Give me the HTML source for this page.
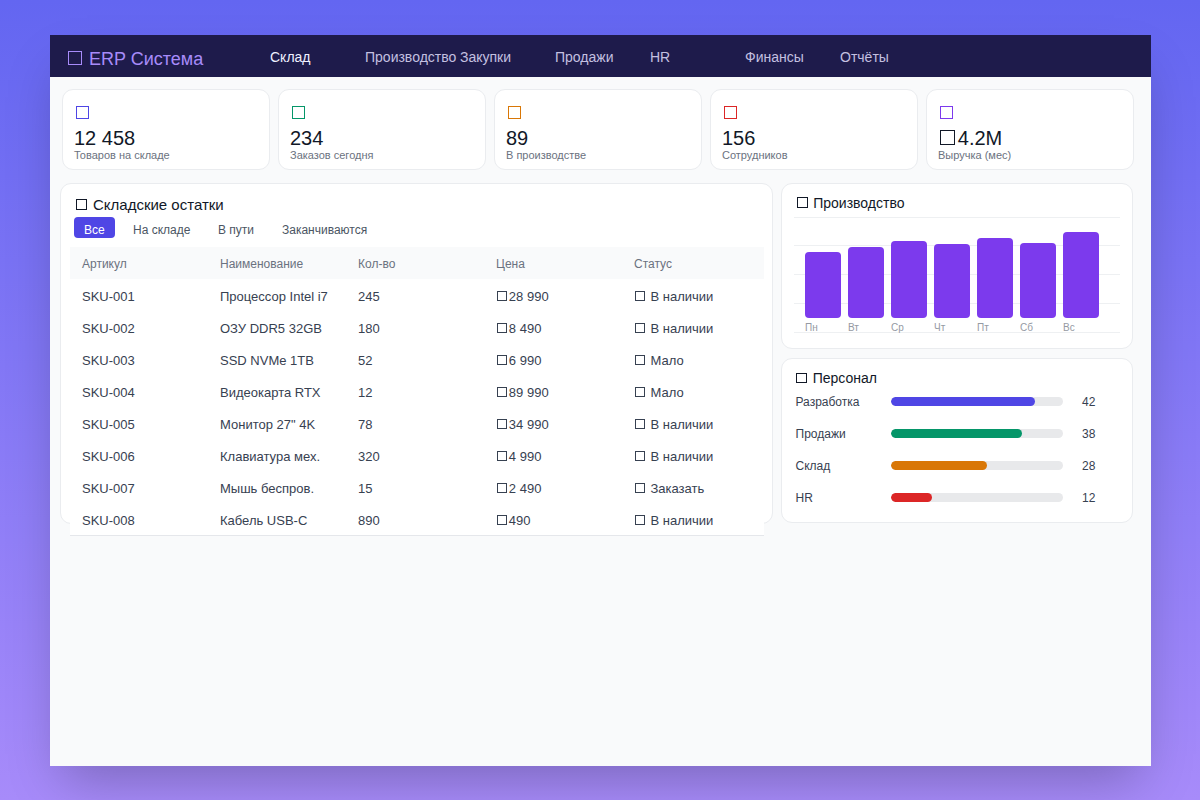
<!DOCTYPE html>
<html><head><meta charset="utf-8">
<style>
*{margin:0;padding:0;box-sizing:border-box}
html,body{width:1200px;height:800px;overflow:hidden}
body{font-family:"Liberation Sans",sans-serif;background:linear-gradient(180deg,#6366f1 0%,#a78bfa 100%);position:relative;color:#1f2937}
.app{position:absolute;left:50px;top:35px;width:1101px;height:731px;background:#f9fafb;box-shadow:0 25px 50px -12px rgba(0,0,0,.25);overflow:hidden}
.nav{position:absolute;left:0;top:0;width:1101px;height:42px;background:#1e1b4b}
.abs{position:absolute;white-space:nowrap}
.tf{display:inline-block;width:.76em;height:.75em;border:1px solid currentColor;margin:0 .13em 0 .1em;vertical-align:baseline}
.logo{left:16.2px;top:14.5px;font-size:18px;line-height:18px;color:#a78bfa}
.ni{top:14px;font-size:14px;line-height:16px;color:#c4c0e0}
.ni.act{color:#eef0ff}
.card{position:absolute;background:#fff;border:1px solid #eaecef;border-radius:11px}
.stat .ic{position:absolute;left:11px;top:14px;font-size:18px;line-height:18px}
.stat .num{position:absolute;left:11px;top:37px;font-size:20px;line-height:22px;color:#111827}
.stat .lbl{position:absolute;left:11px;top:59px;font-size:11px;line-height:13px;color:#6b7280}
.ttl{position:absolute;font-size:15px;line-height:17px;color:#111827}
.tabs{position:absolute;left:13px;top:33px;height:21px}
.tab{position:absolute;top:0;height:21px;font-size:12px;line-height:21px;padding-top:3px;color:#4b5563;white-space:nowrap}
.tab.act{background:#4f46e5;color:#fff;border-radius:4px;padding:3px 10px 0}
table{position:absolute;left:9px;top:63px;width:694px;border-collapse:collapse;table-layout:fixed;background:#fff}
th{background:#f9fafb;height:32px;font-size:12px;font-weight:normal;color:#6b7280;text-align:left;padding:2px 12px 0}
td{height:32px;font-size:13px;color:#374151;padding:2px 12px 0;white-space:nowrap}
tbody tr:last-child td{border-bottom:1px solid #e5e7eb;padding-top:3px}
.ttl2{position:absolute;font-size:14px;line-height:16px;color:#111827;white-space:nowrap}
.grid{position:absolute;left:744px;width:326px;height:1px;background:#eef0f2}
.bar{position:absolute;width:35.8px;background:#7c3aed;border-radius:4px}
.day{position:absolute;top:286.5px;font-size:10px;line-height:11px;color:#959aa3}
.slbl{position:absolute;left:745.5px;padding-top:1px;font-size:12px;line-height:16px;color:#374151;white-space:nowrap}
.track{position:absolute;left:841px;width:172px;height:8.6px;background:#e8e9eb;border-radius:5px;overflow:hidden}
.fill{height:100%;border-radius:5px}
.sval{position:absolute;left:1032px;padding-top:1px;font-size:12px;line-height:16px;color:#374151}
</style></head>
<body>
<div class="app">
  <div class="nav">
    <div class="abs logo"><span class="tf"></span> ERP Система</div>
    <div class="abs ni act" style="left:220px">Склад</div>
    <div class="abs ni" style="left:315px">Производство</div>
    <div class="abs ni" style="left:410px">Закупки</div>
    <div class="abs ni" style="left:505px">Продажи</div>
    <div class="abs ni" style="left:600px">HR</div>
    <div class="abs ni" style="left:695px">Финансы</div>
    <div class="abs ni" style="left:790px">Отчёты</div>
  </div>

  <div class="card stat" style="left:12px;top:54px;width:208px;height:81px">
    <div class="abs ic" style="color:#4f46e5"><span class="tf"></span></div>
    <div class="abs num">12 458</div>
    <div class="abs lbl">Товаров на складе</div>
  </div>
  <div class="card stat" style="left:228px;top:54px;width:208px;height:81px">
    <div class="abs ic" style="color:#059669"><span class="tf"></span></div>
    <div class="abs num">234</div>
    <div class="abs lbl">Заказов сегодня</div>
  </div>
  <div class="card stat" style="left:444px;top:54px;width:208px;height:81px">
    <div class="abs ic" style="color:#d97706"><span class="tf"></span></div>
    <div class="abs num">89</div>
    <div class="abs lbl">В производстве</div>
  </div>
  <div class="card stat" style="left:660px;top:54px;width:208px;height:81px">
    <div class="abs ic" style="color:#dc2626"><span class="tf"></span></div>
    <div class="abs num">156</div>
    <div class="abs lbl">Сотрудников</div>
  </div>
  <div class="card stat" style="left:876px;top:54px;width:208px;height:81px">
    <div class="abs ic" style="color:#7c3aed"><span class="tf"></span></div>
    <div class="abs num"><span class="tf"></span>4.2M</div>
    <div class="abs lbl">Выручка (мес)</div>
  </div>

  <!-- inventory card -->
  <div class="card" style="left:10px;top:148px;width:713px;height:341px;overflow:visible">
    <div class="ttl" style="left:13px;top:12px"><span class="tf"></span> Складские остатки</div>
    <div class="tabs">
      <div class="tab act" style="left:0">Все</div>
      <div class="tab" style="left:59px">На складе</div>
      <div class="tab" style="left:144px">В пути</div>
      <div class="tab" style="left:208px">Заканчиваются</div>
    </div>
    <table>
      <colgroup><col style="width:138px"><col style="width:138px"><col style="width:138px"><col style="width:138px"><col></colgroup>
      <thead><tr><th>Артикул</th><th>Наименование</th><th>Кол-во</th><th>Цена</th><th>Статус</th></tr></thead>
      <tbody>
        <tr><td>SKU-001</td><td>Процессор Intel i7</td><td>245</td><td><span class="tf"></span>28 990</td><td><span class="tf"></span> В наличии</td></tr>
        <tr><td>SKU-002</td><td>ОЗУ DDR5 32GB</td><td>180</td><td><span class="tf"></span>8 490</td><td><span class="tf"></span> В наличии</td></tr>
        <tr><td>SKU-003</td><td>SSD NVMe 1TB</td><td>52</td><td><span class="tf"></span>6 990</td><td><span class="tf"></span> Мало</td></tr>
        <tr><td>SKU-004</td><td>Видеокарта RTX</td><td>12</td><td><span class="tf"></span>89 990</td><td><span class="tf"></span> Мало</td></tr>
        <tr><td>SKU-005</td><td>Монитор 27" 4K</td><td>78</td><td><span class="tf"></span>34 990</td><td><span class="tf"></span> В наличии</td></tr>
        <tr><td>SKU-006</td><td>Клавиатура мех.</td><td>320</td><td><span class="tf"></span>4 990</td><td><span class="tf"></span> В наличии</td></tr>
        <tr><td>SKU-007</td><td>Мышь беспров.</td><td>15</td><td><span class="tf"></span>2 490</td><td><span class="tf"></span> Заказать</td></tr>
        <tr><td>SKU-008</td><td>Кабель USB-C</td><td>890</td><td><span class="tf"></span>490</td><td><span class="tf"></span> В наличии</td></tr>
      </tbody>
    </table>
  </div>

  <!-- production chart -->
  <div class="card" style="left:731px;top:148px;width:352px;height:166px">
  </div>

  <!-- staff -->
  <div class="card" style="left:731px;top:323px;width:352px;height:165px">
  </div>
  <!-- chart -->
  <div class="ttl2" style="left:745.5px;top:159.5px"><span class="tf"></span> Производство</div>
  <div class="grid" style="top:181.8px"></div>
  <div class="grid" style="top:210.0px"></div>
  <div class="grid" style="top:238.8px"></div>
  <div class="grid" style="top:267.8px"></div>
  <div class="grid" style="top:296.8px"></div>
  <div class="bar" style="left:755.0px;top:217.0px;height:65.7px"></div>
  <div class="day" style="left:755.0px">Пн</div>
  <div class="bar" style="left:798.0px;top:212.1px;height:70.6px"></div>
  <div class="day" style="left:798.0px">Вт</div>
  <div class="bar" style="left:841.1px;top:205.9px;height:76.8px"></div>
  <div class="day" style="left:841.1px">Ср</div>
  <div class="bar" style="left:884.1px;top:209.0px;height:73.7px"></div>
  <div class="day" style="left:884.1px">Чт</div>
  <div class="bar" style="left:927.0px;top:203.0px;height:79.7px"></div>
  <div class="day" style="left:927.0px">Пт</div>
  <div class="bar" style="left:970.1px;top:207.9px;height:74.8px"></div>
  <div class="day" style="left:970.1px">Сб</div>
  <div class="bar" style="left:1013.0px;top:196.7px;height:86.0px"></div>
  <div class="day" style="left:1013.0px">Вс</div>
  <!-- staff -->
  <div class="ttl2" style="left:745px;top:335px"><span class="tf"></span> Персонал</div>
  <div class="slbl" style="top:358.1px">Разработка</div>
  <div class="track" style="top:362.1px"><div class="fill" style="width:84%;background:#4f46e5"></div></div>
  <div class="sval" style="top:358.1px">42</div>
  <div class="slbl" style="top:390.1px">Продажи</div>
  <div class="track" style="top:394.1px"><div class="fill" style="width:76%;background:#059669"></div></div>
  <div class="sval" style="top:390.1px">38</div>
  <div class="slbl" style="top:422.1px">Склад</div>
  <div class="track" style="top:426.1px"><div class="fill" style="width:56%;background:#d97706"></div></div>
  <div class="sval" style="top:422.1px">28</div>
  <div class="slbl" style="top:454.1px">HR</div>
  <div class="track" style="top:458.1px"><div class="fill" style="width:24%;background:#dc2626"></div></div>
  <div class="sval" style="top:454.1px">12</div>
</div>
</body></html>
